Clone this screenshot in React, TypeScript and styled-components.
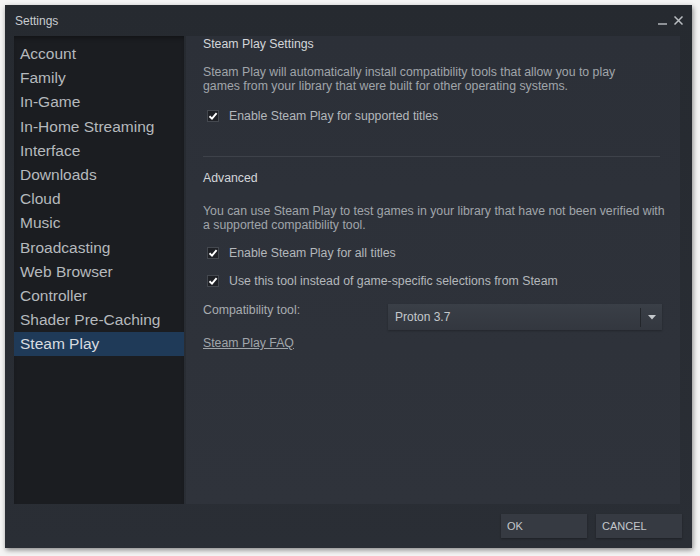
import React from "react";
import styled, { createGlobalStyle } from "styled-components";

const GlobalStyle = createGlobalStyle`
  html, body {
    margin: 0;
    padding: 0;
    background: #f4f4f4;
  }
  body {
    font-family: "Liberation Sans", Arial, sans-serif;
  }
`;

const Page = styled.div`
  width: 700px;
  height: 556px;
  padding: 5px 8px 8px 5px;
  box-sizing: border-box;
`;

const Window = styled.div`
  height: 543px;
  background: linear-gradient(180deg, #262a30 0%, #2a2e35 100%);
  box-shadow: 1px 2px 5px rgba(0, 0, 0, 0.45);
  display: flex;
  flex-direction: column;
`;

const TitleBar = styled.div`
  height: 31px;
  display: flex;
  align-items: center;
  justify-content: space-between;
  padding: 0 9px 0 10px;
  color: #c8ccd0;
  font-size: 12px;
`;

const WindowControls = styled.div`
  display: flex;
  align-items: center;
  gap: 7px;
  color: #a9adb1;
`;

const Body = styled.div`
  flex: 1;
  display: flex;
  gap: 2px;
  padding: 0 12px 0 9px;
  min-height: 0;
`;

const Sidebar = styled.ul`
  list-style: none;
  margin: 0;
  padding: 6px 0 0;
  width: 170px;
  flex-shrink: 0;
  background: #1b1d21;
  box-shadow: inset 0 4px 4px -2px rgba(0, 0, 0, 0.35);
`;

const NavItem = styled.li<{ $active?: boolean }>`
  height: 24.2px;
  line-height: 24px;
  padding-left: 6px;
  font-size: 15.5px;
  color: ${({ $active }) => ($active ? "#d8dce0" : "#b5b9bd")};
  background: ${({ $active }) => ($active ? "#1f3a58" : "transparent")};
`;

const Content = styled.div`
  flex: 1;
  min-width: 0;
  background: linear-gradient(180deg, #2c3038 0%, #2f333b 100%);
  padding: 1px 18px 0 17px;
  font-size: 12.3px;
  color: #9ea3a8;
  white-space: nowrap;
`;

const Heading = styled.div`
  color: #d3d6d9;
  font-size: 12.3px;
  line-height: 14px;
`;

const Paragraph = styled.p`
  margin: 0;
  line-height: 14px;
  color: #a0a5aa;
`;

const CheckRow = styled.label`
  display: flex;
  align-items: center;
  gap: 10px;
  padding-left: 4px;
  height: 14px;
  color: #b3b7bb;
`;

const Box = styled.span`
  width: 12px;
  height: 12px;
  box-sizing: border-box;
  background: #1f2126;
  border: 1px solid #44484f;
  display: flex;
  align-items: center;
  justify-content: center;
`;

const Divider = styled.hr`
  border: none;
  border-top: 1px solid #3e424a;
  margin: 0;
  width: 457px;
`;

const Section = styled.div<{ $gap: number }>`
  display: flex;
  flex-direction: column;
  gap: ${({ $gap }) => $gap}px;
`;

const Spacer = styled.div<{ $h: number }>`
  height: ${({ $h }) => $h}px;
`;

const ToolRow = styled.div`
  display: flex;
  align-items: flex-start;
  justify-content: space-between;
  margin-top: 2px;
`;

const ToolLabel = styled.span`
  color: #a8acb0;
`;

const Select = styled.div`
  width: 274px;
  height: 26px;
  margin-top: 1px;
  background: linear-gradient(180deg, #3a3f47 0%, #33373f 100%);
  display: flex;
  align-items: center;
  color: #c4c8cc;
  font-size: 12px;
  box-shadow: 0 1px 2px rgba(0, 0, 0, 0.25);
`;

const SelectValue = styled.span`
  flex: 1;
  padding-left: 7px;
`;

const SelectArrow = styled.span`
  width: 21px;
  height: 19px;
  border-left: 1px solid #23262b;
  display: flex;
  align-items: center;
  justify-content: center;
`;

const FaqLink = styled.a`
  color: #a0a5aa;
  text-decoration: underline;
  align-self: flex-start;
  margin-top: -7px;
`;

const Footer = styled.div`
  height: 44px;
  display: flex;
  justify-content: flex-end;
  align-items: center;
  gap: 9px;
  padding: 0 10px 0 0;
`;

const Button = styled.button`
  width: 86px;
  height: 24px;
  border: none;
  background: #363a42;
  color: #c3c7cb;
  font-family: "Liberation Sans", Arial, sans-serif;
  font-size: 11px;
  text-align: left;
  padding: 0 6px;
  box-shadow: 0 1px 2px rgba(0, 0, 0, 0.3);
`;

const Check = () => (
  <Box>
    <svg width="10" height="10" viewBox="0 0 10 10">
      <path d="M1.5 5.2 L4 7.6 L8.6 2.2" fill="none" stroke="#ffffff" strokeWidth="1.9" />
    </svg>
  </Box>
);

const navItems = [
  "Account",
  "Family",
  "In-Game",
  "In-Home Streaming",
  "Interface",
  "Downloads",
  "Cloud",
  "Music",
  "Broadcasting",
  "Web Browser",
  "Controller",
  "Shader Pre-Caching",
  "Steam Play",
];

export default function App() {
  return (
    <Page>
      <GlobalStyle />
      <Window>
        <TitleBar>
          <span>Settings</span>
          <WindowControls>
            <svg width="9" height="9" viewBox="0 0 9 9">
              <path d="M0 8 H9" stroke="#a9adb1" strokeWidth="1.6" />
            </svg>
            <svg width="9" height="9" viewBox="0 0 9 9">
              <path d="M0.5 0.5 L8.5 8.5 M8.5 0.5 L0.5 8.5" stroke="#b9bdc1" strokeWidth="1.5" />
            </svg>
          </WindowControls>
        </TitleBar>
        <Body>
          <Sidebar>
            {navItems.map((item) => (
              <NavItem key={item} $active={item === "Steam Play"}>
                {item}
              </NavItem>
            ))}
          </Sidebar>
          <Content>
            <Section $gap={14}>
              <Heading>Steam Play Settings</Heading>
              <Paragraph>
                Steam Play will automatically install compatibility tools that allow you to play
                <br />
                games from your library that were built for other operating systems.
              </Paragraph>
              <CheckRow style={{ marginTop: 2 }}>
                <Check />
                Enable Steam Play for supported titles
              </CheckRow>
            </Section>
            <Spacer $h={33} />
            <Divider />
            <Spacer $h={14} />
            <Section $gap={13}>
              <Heading>Advanced</Heading>
              <Paragraph style={{ marginTop: 6 }}>
                You can use Steam Play to test games in your library that have not been verified with
                <br />
                a supported compatibility tool.
              </Paragraph>
              <CheckRow style={{ marginTop: 1 }}>
                <Check />
                Enable Steam Play for all titles
              </CheckRow>
              <CheckRow style={{ marginTop: 1 }}>
                <Check />
                Use this tool instead of game-specific selections from Steam
              </CheckRow>
              <ToolRow>
                <ToolLabel>Compatibility tool:</ToolLabel>
                <Select>
                  <SelectValue>Proton 3.7</SelectValue>
                  <SelectArrow>
                    <svg width="8" height="5" viewBox="0 0 8 5">
                      <path d="M0 0 H8 L4 4.5 Z" fill="#c4c8cc" />
                    </svg>
                  </SelectArrow>
                </Select>
              </ToolRow>
              <FaqLink>Steam Play FAQ</FaqLink>
            </Section>
          </Content>
        </Body>
        <Footer>
          <Button>OK</Button>
          <Button>CANCEL</Button>
        </Footer>
      </Window>
    </Page>
  );
}
